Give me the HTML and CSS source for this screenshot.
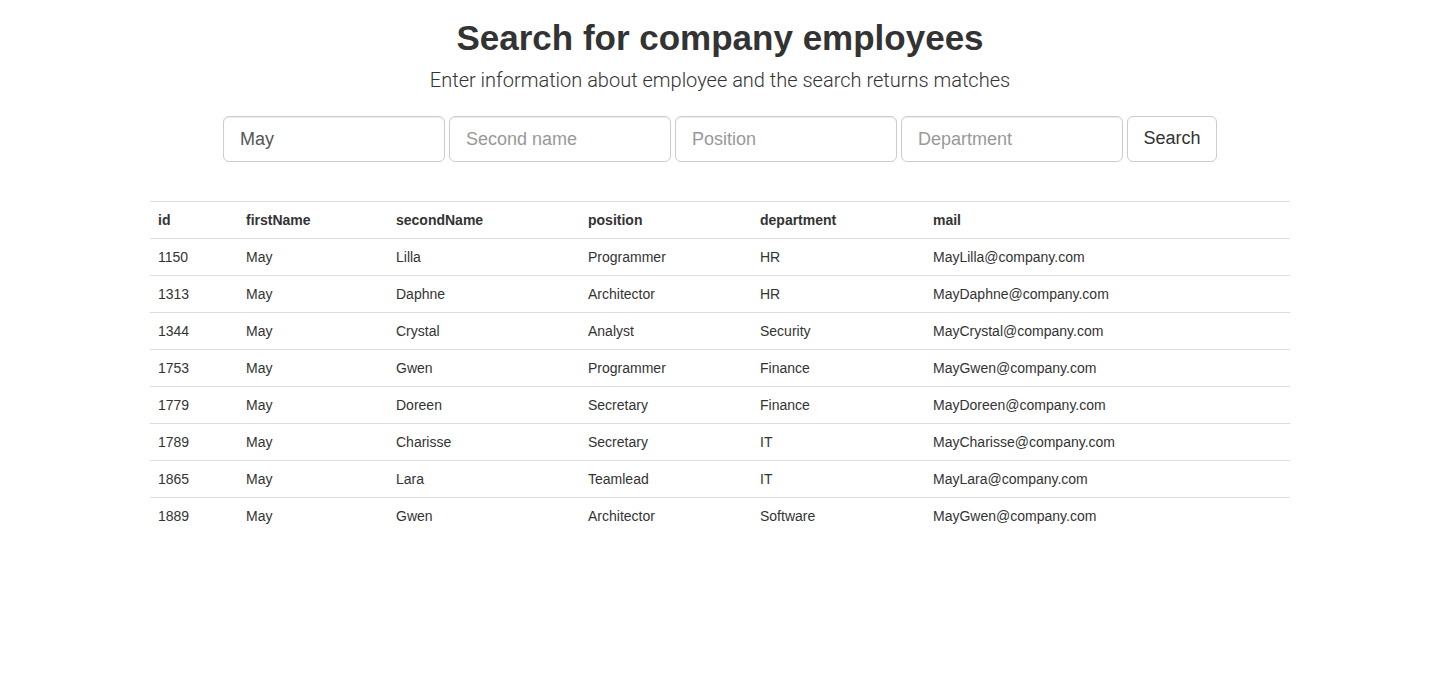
FILE: index.html
```html
<!DOCTYPE html>
<html>
<head>
<meta charset="utf-8">
<link rel="stylesheet" href="styles.css">
</head>
<body>
<div class="container">
  <h1 class="title">Search for company employees</h1>
  <p class="subtitle">Enter information about employee and the search returns matches</p>
  <form class="search">
    <input class="field" type="text" value="May" placeholder="First name">
    <input class="field" type="text" placeholder="Second name">
    <input class="field" type="text" placeholder="Position">
    <input class="field" type="text" placeholder="Department">
    <button class="btn" type="button">Search</button>
  </form>
  <table class="results">
    <thead>
      <tr><th class="c-id">id</th><th class="c-first">firstName</th><th class="c-second">secondName</th><th class="c-pos">position</th><th class="c-dep">department</th><th>mail</th></tr>
    </thead>
    <tbody>
      <tr><td>1150</td><td>May</td><td>Lilla</td><td>Programmer</td><td>HR</td><td>MayLilla@company.com</td></tr>
      <tr><td>1313</td><td>May</td><td>Daphne</td><td>Architector</td><td>HR</td><td>MayDaphne@company.com</td></tr>
      <tr><td>1344</td><td>May</td><td>Crystal</td><td>Analyst</td><td>Security</td><td>MayCrystal@company.com</td></tr>
      <tr><td>1753</td><td>May</td><td>Gwen</td><td>Programmer</td><td>Finance</td><td>MayGwen@company.com</td></tr>
      <tr><td>1779</td><td>May</td><td>Doreen</td><td>Secretary</td><td>Finance</td><td>MayDoreen@company.com</td></tr>
      <tr><td>1789</td><td>May</td><td>Charisse</td><td>Secretary</td><td>IT</td><td>MayCharisse@company.com</td></tr>
      <tr><td>1865</td><td>May</td><td>Lara</td><td>Teamlead</td><td>IT</td><td>MayLara@company.com</td></tr>
      <tr><td>1889</td><td>May</td><td>Gwen</td><td>Architector</td><td>Software</td><td>MayGwen@company.com</td></tr>
    </tbody>
  </table>
</div>
</body>
</html>
```

FILE: styles.css
```css
* { box-sizing: border-box; }
html, body {
  margin: 0;
  padding: 0;
  background: #fff;
  color: #333;
  font-family: "Liberation Sans", Arial, sans-serif;
  font-size: 14px;
  line-height: 1.42857;
}
.container {
  width: 1170px;
  margin: 0 auto;
  padding: 0 15px;
}
.title {
  margin: 18px 0 0;
  font-size: 35px;
  line-height: 40px;
  font-weight: 700;
  text-align: center;
  color: #333;
}
.subtitle {
  margin: 11px 0 0;
  font-family: "Roboto", "Liberation Sans", sans-serif;
  font-weight: 300;
  font-size: 20px;
  line-height: 22px;
  text-align: center;
  color: #333;
}
.search {
  margin-top: 25px;
  display: flex;
  justify-content: center;
  gap: 4px;
}
.field {
  width: 222px;
  height: 46px;
  padding: 10px 16px;
  font-family: "Liberation Sans", Arial, sans-serif;
  font-size: 18px;
  line-height: 1.33;
  color: #555;
  border: 1px solid #ccc;
  border-radius: 6px;
  background: #fff;
  box-shadow: inset 0 1px 1px rgba(0,0,0,0.075);
  outline: none;
}
.field::placeholder { color: #999; }
.btn {
  width: 90px;
  height: 46px;
  padding: 10px 0;
  font-family: "Liberation Sans", Arial, sans-serif;
  font-size: 18px;
  line-height: 1.33;
  color: #333;
  background: #fff;
  border: 1px solid #ccc;
  border-radius: 6px;
}
.results {
  margin-top: 39px;
  width: 100%;
  border-collapse: collapse;
  border-spacing: 0;
}
.results th, .results td {
  padding: 8px;
  text-align: left;
  line-height: 20px;
  font-size: 14px;
  border-top: 1px solid #ddd;
  vertical-align: top;
}
.results th {
  font-weight: 700;
  border-bottom: 1px solid #ddd;
}
.results tbody tr:first-child td { border-top: 0; }
.c-id { width: 88px; }
.c-first { width: 150px; }
.c-second { width: 192px; }
.c-pos { width: 172px; }
.c-dep { width: 173px; }
```
